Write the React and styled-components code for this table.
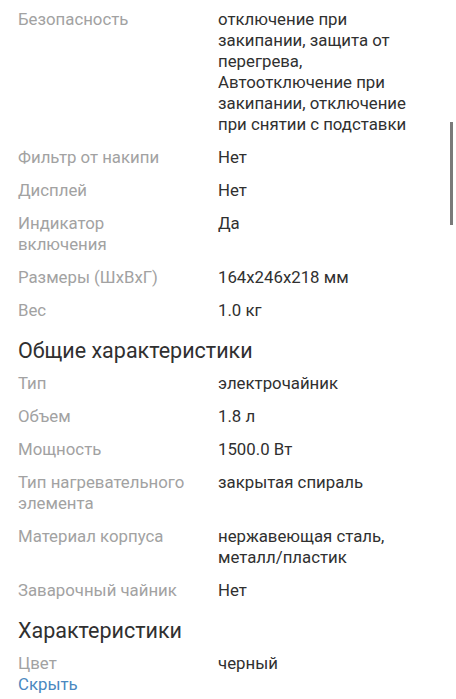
import React from 'react';
import styled, { createGlobalStyle } from 'styled-components';

const GlobalStyle = createGlobalStyle`
  html, body {
    margin: 0;
    padding: 0;
    background: #ffffff;
    overflow: hidden;
  }
  body {
    font-family: Roboto, "Noto Sans", "Liberation Sans", sans-serif;
    -webkit-font-smoothing: antialiased;
  }
`;

const sections = [
  {
    rows: [
      ['Безопасность', 'отключение при закипании, защита от перегрева, Автоотключение при закипании, отключение при снятии с подставки'],
      ['Фильтр от накипи', 'Нет'],
      ['Дисплей', 'Нет'],
      ['Индикатор включения', 'Да'],
      ['Размеры (ШхВхГ)', '164x246x218 мм'],
      ['Вес', '1.0 кг'],
    ],
  },
  {
    title: 'Общие характеристики',
    rows: [
      ['Тип', 'электрочайник'],
      ['Объем', '1.8 л'],
      ['Мощность', '1500.0 Вт'],
      ['Тип нагревательного элемента', 'закрытая спираль'],
      ['Материал корпуса', 'нержавеющая сталь, металл/пластик'],
      ['Заварочный чайник', 'Нет'],
    ],
  },
  {
    title: 'Характеристики',
    rows: [['Цвет', 'черный']],
  },
];

export default function App() {
  return (
    <>
      <GlobalStyle />
      <Page>
        {sections.map((s, i) => (
          <Section key={i}>
            {s.title && <Heading>{s.title}</Heading>}
            <Table>
              {s.rows.map(([label, value]) => (
                <Row key={label}>
                  <Label>{label}</Label>
                  <Value>{value}</Value>
                </Row>
              ))}
            </Table>
          </Section>
        ))}
        <HideLink>Скрыть</HideLink>
      </Page>
      <ScrollThumb />
    </>
  );
}

const Page = styled.div`
  padding: 9px 18px 0 18px;
  display: flex;
  flex-direction: column;
`;

const Section = styled.section`
  display: flex;
  flex-direction: column;
`;

const Heading = styled.h2`
  margin: 4px 0 8px 0;
  font-size: 21.5px;
  line-height: 28px;
  font-weight: 400;
  color: #303030;
`;

const Table = styled.div`
  display: flex;
  flex-direction: column;
  gap: 12px;
  margin-bottom: 12px;
`;

const Row = styled.div`
  display: grid;
  grid-template-columns: 200px 1fr;
  font-size: 16.8px;
  line-height: 21px;
`;

const Label = styled.div`
  color: #a2a2a2;
  padding-right: 24px;
`;

const Value = styled.div`
  color: #303030;
  padding-right: 8px;
`;

const HideLink = styled.a`
  margin-top: -12px;
  font-size: 16.8px;
  line-height: 21px;
  color: #4a88c0;
  cursor: pointer;
`;

const ScrollThumb = styled.div`
  position: fixed;
  left: 450px;
  top: 122px;
  width: 3px;
  height: 103px;
  background: #7a7a7a;
`;
